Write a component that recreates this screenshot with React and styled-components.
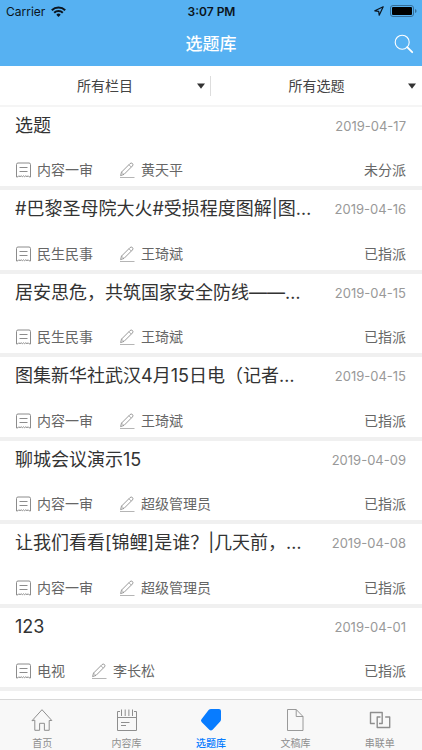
import React from "react";
import styled, { createGlobalStyle } from "styled-components";

const GlobalStyle = createGlobalStyle`
  * { box-sizing: border-box; }
  body {
    margin: 0;
    background: #fff;
    font-family: Inter, "Noto Sans CJK SC", sans-serif;
    color: #333;
  }
  button, select { font: inherit; color: inherit; border: 0; background: none; padding: 0; margin: 0; }
`;

const Page = styled.div`
  display: flex;
  flex-direction: column;
  height: 100vh;
  overflow: hidden;
`;

const Header = styled.header`
  background: #56b1f2;
`;

const StatusBar = styled.div`
  display: grid;
  grid-template-columns: 1fr auto 1fr;
  align-items: center;
  height: 22px;
  padding: 0 5px 0 6px;
  font-size: 12px;
  color: #0b1520;
`;

const StatusGroup = styled.div`
  display: flex;
  align-items: center;
  gap: 6px;
  justify-content: ${(p) => (p.$end ? "flex-end" : "flex-start")};
`;

const Clock = styled.span`
  font-weight: 600;
`;

const NavBar = styled.div`
  display: grid;
  grid-template-columns: 36px 1fr 36px;
  align-items: center;
  height: 44px;
`;

const NavTitle = styled.h1`
  grid-column: 2;
  margin: 0;
  font-size: 17px;
  line-height: 24px;
  font-weight: 500;
  text-align: center;
  color: #fff;
`;

const SearchButton = styled.button`
  display: flex;
  padding: 8px;
  color: #fff;
`;

const Filters = styled.div`
  display: grid;
  grid-template-columns: 1fr 1fr;
  align-items: center;
  height: 41px;
  border-bottom: 2px solid #f5f5f5;
`;

const FilterBox = styled.label`
  display: grid;
  align-items: center;
  height: 20px;
  border-right: ${(p) => (p.$divided ? "1px solid #ddd" : "0")};

  & > * { grid-area: 1 / 1; }
  & > svg { justify-self: end; margin-right: ${(p) => (p.$divided ? "5px" : "6px")}; pointer-events: none; }
`;

const FilterSelect = styled.select`
  appearance: none;
  width: 100%;
  font-size: 14px;
  line-height: 20px;
  text-align: center;
  text-align-last: center;
  color: #444;
`;

const List = styled.ul`
  flex: 1;
  min-height: 0;
  overflow-y: auto;
  scrollbar-width: none;
  display: grid;
  grid-auto-rows: 83px 84px;
  align-content: start;
  margin: 0;
  padding: 0;
  list-style: none;
`;

const Item = styled.li`
  display: flex;
  flex-direction: column;
  justify-content: space-between;
  padding: 6px 16px 5px 15px;
  border-bottom: 4px solid #f0f0f0;
`;

const ItemLine = styled.div`
  display: flex;
  align-items: center;
  justify-content: space-between;
`;

const ItemTitle = styled.h2`
  margin: 0;
  min-width: 0;
  font-size: 18px;
  line-height: 26px;
  font-weight: 400;
  white-space: nowrap;
`;

const ItemDate = styled.time`
  font-size: 13px;
  line-height: 20px;
  color: #999;
`;

const Meta = styled.div`
  display: flex;
  align-items: center;
  gap: 26px;
`;

const MetaPart = styled.span`
  display: flex;
  align-items: center;
  gap: 6px;
  font-size: 14px;
  line-height: 22px;
  color: #666;

  & > svg { color: #8c8c8c; }
`;

const State = styled.span`
  font-size: 14px;
  line-height: 22px;
  color: #666;
`;

const TabBar = styled.nav`
  display: grid;
  grid-template-columns: repeat(5, 1fr);
  height: 51px;
  border-top: 1px solid #d8d8d8;
  background: #f8f8f8;
`;

const Tab = styled.button`
  display: flex;
  flex-direction: column;
  align-items: center;
  justify-content: space-between;
  padding-top: 8px;
  font-size: 10px;
  line-height: 14px;
  font-weight: ${(p) => (p.$active ? 500 : 400)};
  color: ${(p) => (p.$active ? "#087cff" : "#8e8e8e")};
`;

const WifiIcon = () => (
  <svg width="15" height="11" viewBox="0 0 15 11" fill="none" stroke="currentColor" strokeWidth="2" aria-hidden="true">
    <path d="M.8 4.2a9.5 9.5 0 0 1 13.4 0M3.2 6.7a6.1 6.1 0 0 1 8.6 0" />
    <path d="M5.3 8.7a3.1 3.1 0 0 1 4.4 0L7.5 10.9z" fill="currentColor" stroke="none" />
  </svg>
);

const LocationIcon = () => (
  <svg width="10" height="10" viewBox="0 0 10 10" fill="none" stroke="currentColor" strokeWidth="1.2" strokeLinejoin="round" aria-hidden="true">
    <path d="M9.2 .8.8 4.8l3.9.5.5 3.9z" />
  </svg>
);

const BatteryIcon = () => (
  <svg width="27" height="12" viewBox="0 0 27 12" aria-hidden="true">
    <rect x=".5" y=".5" width="23" height="11" rx="2.5" fill="none" stroke="#356e99" />
    <rect x="2" y="2" width="20" height="8" rx="1" fill="#000" />
    <path d="M25 4q1.6.5 1.6 2T25 8z" fill="#356e99" />
  </svg>
);

const SearchIcon = () => (
  <svg width="20" height="20" viewBox="0 0 20 20" fill="none" stroke="currentColor" aria-hidden="true">
    <circle cx="8.2" cy="8.2" r="7" strokeWidth="1.1" />
    <path d="m13.2 13.2 5 5" strokeWidth="1.8" strokeLinecap="round" />
  </svg>
);

const ArrowIcon = () => (
  <svg width="8" height="6" viewBox="0 0 8 6" aria-hidden="true">
    <path d="M0 .5h8L4 5.7z" fill="#333" />
  </svg>
);

const ColumnIcon = () => (
  <svg width="16" height="16" viewBox="0 0 16 16" fill="none" stroke="currentColor" strokeLinejoin="round" aria-hidden="true">
    <path d="M1.5 15V2.5q0-1.500 1.500-1.500h11q1.500 0 1.500 1.500V15q-1.600.3-2.300-1.200-1.200 1.800-2.400 0-1.200 1.800-2.300 0-1.200 1.800-2.300 0-1.200 1.800-2.400 0Q3.100 15.300 1.500 15z" />
    <path d="M4.500 5.500h8M4.500 9.500h8" />
  </svg>
);

const PenIcon = () => (
  <svg width="16" height="16" viewBox="0 0 16 16" fill="none" stroke="currentColor" strokeLinejoin="round" aria-hidden="true">
    <path d="m1.6 13.6.9-3.5 8.6-8.6q1.2-.9 2.3 0 1.1 1.1.1 2.4l-8.5 8.5z" strokeWidth=".9" />
    <path d="m10 2.8 2.3 2.3M2.5 10.1l2.4 2.3" strokeWidth=".7" />
    <path d="M1 15.5h14.5" stroke="#b5b5b5" />
  </svg>
);

const HomeIcon = () => (
  <svg width="22" height="24" viewBox="0 0 22 24" fill="none" stroke="currentColor" strokeLinejoin="round" strokeLinecap="round" aria-hidden="true">
    <path d="M1.2 12.5 11 1.7l9.8 10.8h-2.6V22.3h-4.8v-7H8.6v7H3.8v-9.8z" />
  </svg>
);

const NoteIcon = () => (
  <svg width="22" height="24" viewBox="0 0 22 24" fill="none" stroke="currentColor" strokeLinejoin="round" aria-hidden="true">
    <path d="M4 3.5H1.5v19h19v-19H18M1.5 9.5h19M5.5 1.5V8M9.2 1.5V8M12.9 1.5V8M16.5 1.5V8" />
    <path d="M5 14.5h8.5M5 17.5h5" />
  </svg>
);

const TagIcon = () => (
  <svg width="22" height="24" viewBox="0 0 22 24" aria-hidden="true">
    <path d="M11 1h8q2 0 2 2v8.5q0 1.2-.8 2l-7.6 8.2q-1.6 1.6-3.3.1l-7.7-7.9q-1.2-1.3-.1-2.6L8.6 2.1Q9.6 1 11 1z" fill="#087cff" />
  </svg>
);

const FileIcon = () => (
  <svg width="22" height="24" viewBox="0 0 22 24" fill="none" stroke="currentColor" strokeWidth=".9" strokeLinejoin="round" aria-hidden="true">
    <path d="M3.5 1.5h8.7l6.8 7v14H3.5zM12.2 1.5v7H19" />
  </svg>
);

const LinkedIcon = () => (
  <svg width="22" height="24" viewBox="0 0 22 24" fill="none" stroke="currentColor" strokeWidth="1.4" strokeLinejoin="round" aria-hidden="true">
    <path d="M5.8 15.5H1.5v-11h11.7v11H10" />
    <path d="M11.5 9H8.2v10.5h12.5V9h-4.5" />
  </svg>
);

const items = [
  { title: "选题", date: "2019-04-17", column: "内容一审", author: "黄天平", state: "未分派" },
  { title: "#巴黎圣母院大火#受损程度图解|图…", date: "2019-04-16", column: "民生民事", author: "王琦斌", state: "已指派" },
  { title: "居安思危，共筑国家安全防线——…", date: "2019-04-15", column: "民生民事", author: "王琦斌", state: "已指派" },
  { title: "图集新华社武汉4月15日电（记者…", date: "2019-04-15", column: "内容一审", author: "王琦斌", state: "已指派" },
  { title: "聊城会议演示15", date: "2019-04-09", column: "内容一审", author: "超级管理员", state: "已指派" },
  { title: "让我们看看[锦鲤]是谁？|几天前，…", date: "2019-04-08", column: "内容一审", author: "超级管理员", state: "已指派" },
  { title: "123", date: "2019-04-01", column: "电视", author: "李长松", state: "已指派" },
];

const tabs = [
  { label: "首页", Icon: HomeIcon },
  { label: "内容库", Icon: NoteIcon },
  { label: "选题库", Icon: TagIcon, active: true },
  { label: "文稿库", Icon: FileIcon },
  { label: "串联单", Icon: LinkedIcon },
];

export default function App() {
  return (
    <Page>
      <GlobalStyle />
      <Header>
        <StatusBar>
          <StatusGroup>
            <span>Carrier</span>
            <WifiIcon />
          </StatusGroup>
          <Clock>3:07 PM</Clock>
          <StatusGroup $end>
            <LocationIcon />
            <BatteryIcon />
          </StatusGroup>
        </StatusBar>
        <NavBar>
          <NavTitle>选题库</NavTitle>
          <SearchButton type="button" aria-label="搜索">
            <SearchIcon />
          </SearchButton>
        </NavBar>
      </Header>
      <Filters>
        <FilterBox $divided>
          <FilterSelect aria-label="栏目">
            <option>所有栏目</option>
          </FilterSelect>
          <ArrowIcon />
        </FilterBox>
        <FilterBox>
          <FilterSelect aria-label="选题">
            <option>所有选题</option>
          </FilterSelect>
          <ArrowIcon />
        </FilterBox>
      </Filters>
      <List>
        {items.map((item) => (
          <Item key={item.title}>
            <ItemLine>
              <ItemTitle>{item.title}</ItemTitle>
              <ItemDate>{item.date}</ItemDate>
            </ItemLine>
            <ItemLine>
              <Meta>
                <MetaPart><ColumnIcon />{item.column}</MetaPart>
                <MetaPart><PenIcon />{item.author}</MetaPart>
              </Meta>
              <State>{item.state}</State>
            </ItemLine>
          </Item>
        ))}
      </List>
      <TabBar>
        {tabs.map(({ label, Icon, active }) => (
          <Tab key={label} type="button" $active={active} aria-current={active ? "page" : undefined}>
            <Icon />
            {label}
          </Tab>
        ))}
      </TabBar>
    </Page>
  );
}
